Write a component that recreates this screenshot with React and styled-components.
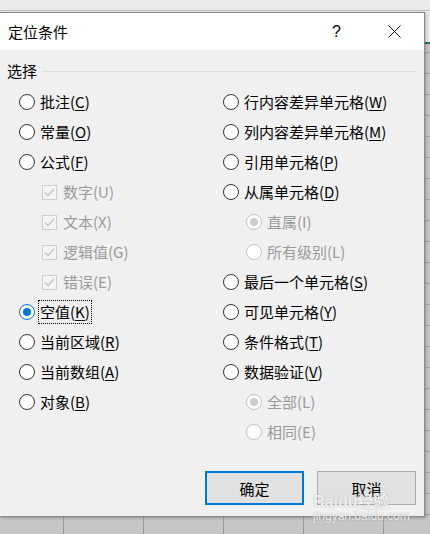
import styled, { createGlobalStyle } from "styled-components";

const GlobalStyle = createGlobalStyle`
  html, body {
    margin: 0;
    padding: 0;
    background: #c8c8c8;
  }
  * {
    box-sizing: border-box;
  }
`;

const leftItems = [
  { label: "批注", key: "C" },
  { label: "常量", key: "O" },
  { label: "公式", key: "F" },
  { label: "数字", key: "U", sub: "check", disabled: true },
  { label: "文本", key: "X", sub: "check", disabled: true },
  { label: "逻辑值", key: "G", sub: "check", disabled: true },
  { label: "错误", key: "E", sub: "check", disabled: true },
  { label: "空值", key: "K", checked: true, focus: true },
  { label: "当前区域", key: "R" },
  { label: "当前数组", key: "A" },
  { label: "对象", key: "B" },
];

const rightItems = [
  { label: "行内容差异单元格", key: "W" },
  { label: "列内容差异单元格", key: "M" },
  { label: "引用单元格", key: "P" },
  { label: "从属单元格", key: "D" },
  { label: "直属", key: "I", sub: "radio", disabled: true, checked: true },
  { label: "所有级别", key: "L", sub: "radio", disabled: true },
  { label: "最后一个单元格", key: "S" },
  { label: "可见单元格", key: "Y" },
  { label: "条件格式", key: "T" },
  { label: "数据验证", key: "V" },
  { label: "全部", key: "L", sub: "radio", disabled: true, checked: true },
  { label: "相同", key: "E", sub: "radio", disabled: true },
];

const Option = ({ item }) => {
  const { label, key, sub, disabled, checked, focus } = item;
  return (
    <Row $indent={!!sub}>
      {sub === "check" ? (
        <CheckBox>
          <svg width="13" height="13" viewBox="0 0 13 13">
            <path d="M2 6.5 L5 9.5 L11 3" fill="none" stroke="#c4c4c4" strokeWidth="1.3" />
          </svg>
        </CheckBox>
      ) : (
        <Radio $checked={checked} $disabled={disabled} />
      )}
      <Label $disabled={disabled} $focus={focus}>
        {label}(
        {disabled ? key : <Key>{key}</Key>})
      </Label>
    </Row>
  );
};

const App = () => {
  return (
    <>
      <GlobalStyle />
      <Page>
        <Dialog>
          <TitleBar>
            <Title>定位条件</Title>
            <TitleButtons>
              <Help>?</Help>
              <svg width="13" height="13" viewBox="0 0 13 13">
                <path d="M0.5 0.5 L12.5 12.5 M12.5 0.5 L0.5 12.5" stroke="#111" strokeWidth="1" />
              </svg>
            </TitleButtons>
          </TitleBar>
          <Body>
            <Legend>
              <LegendText>选择</LegendText>
              <LegendLine />
            </Legend>
            <Columns>
              <Column>
                {leftItems.map((item) => (
                  <Option key={item.label} item={item} />
                ))}
              </Column>
              <Column>
                {rightItems.map((item) => (
                  <Option key={item.label} item={item} />
                ))}
              </Column>
            </Columns>
            <Buttons>
              <Button $primary>确定</Button>
              <Button>取消</Button>
            </Buttons>
          </Body>
        </Dialog>
        <Watermark>
          <WmBig>Baidu经验</WmBig>
          <WmSmall>jingyan.baidu.com</WmSmall>
        </Watermark>
      </Page>
    </>
  );
};

export default App;

const Page = styled.div`
  position: relative;
  width: 430px;
  height: 534px;
  overflow: hidden;
  padding-top: 12px;
  background:
    linear-gradient(#c2c2c2, #c2c2c2) 0 10px / 100% 1px no-repeat,
    linear-gradient(#217346, #217346) 0 42px / 100% 2px no-repeat,
    linear-gradient(#e9e9e9, #e9e9e9) 0 0 / 100% 44px no-repeat,
    repeating-linear-gradient(90deg, transparent 0 63px, #9c9c9c 63px 64px, transparent 64px 80px),
    repeating-linear-gradient(180deg, transparent 0 10px, #a6a6a6 10px 11px, transparent 11px 21px),
    #c6c6c6;
`;

const Dialog = styled.div`
  width: 425px;
  height: 505px;
  background: #f0f0f0;
  border: 1px solid #8a8a8a;
  border-left: none;
  display: flex;
  flex-direction: column;
  font-family: "Noto Sans CJK SC", "Noto Sans", sans-serif;
  color: #000;
  box-shadow: 1px 1px 3px rgba(0, 0, 0, 0.25);
`;

const TitleBar = styled.div`
  height: 37px;
  background: #fff;
  display: flex;
  align-items: center;
  justify-content: space-between;
  padding: 0 23px 0 8px;
`;

const Title = styled.div`
  font-size: 15px;
  line-height: 20px;
`;

const TitleButtons = styled.div`
  display: flex;
  align-items: center;
  gap: 47px;
`;

const Help = styled.span`
  font-family: "Liberation Sans", sans-serif;
  font-size: 16px;
  line-height: 20px;
`;

const Body = styled.div`
  flex: 1;
  display: flex;
  flex-direction: column;
`;

const Legend = styled.div`
  display: flex;
  align-items: center;
  gap: 5px;
  height: 20px;
  margin: 11px 7px 0 7px;
`;

const LegendText = styled.span`
  font-size: 15px;
  line-height: 20px;
`;

const LegendLine = styled.div`
  flex: 1;
  height: 1px;
  background: #dcdcdc;
`;

const Columns = styled.div`
  display: grid;
  grid-template-columns: 204px 1fr;
  padding-left: 19px;
  margin-top: 6px;
`;

const Column = styled.div`
  display: flex;
  flex-direction: column;
`;

const Row = styled.div`
  height: 30px;
  display: flex;
  align-items: center;
  padding-left: ${({ $indent }) => ($indent ? "23px" : "0")};
`;

const Radio = styled.span`
  position: relative;
  width: 16px;
  height: 16px;
  border-radius: 50%;
  flex-shrink: 0;
  background: #fff;
  border: 1px solid
    ${({ $checked, $disabled }) =>
      $disabled ? "#c2c2c2" : $checked ? "#0078d7" : "#333"};
  margin-right: 5px;

  &::after {
    content: "";
    display: ${({ $checked }) => ($checked ? "block" : "none")};
    position: absolute;
    left: 3px;
    top: 3px;
    width: 8px;
    height: 8px;
    border-radius: 50%;
    background: ${({ $disabled }) => ($disabled ? "#cccccc" : "#0078d7")};
  }
`;

const CheckBox = styled.span`
  width: 15px;
  height: 15px;
  flex-shrink: 0;
  border: 1px solid #cccccc;
  background: #f4f4f4;
  display: flex;
  align-items: center;
  justify-content: center;
  margin-right: 6px;
`;

const Label = styled.span`
  font-size: 15px;
  line-height: 20px;
  white-space: nowrap;
  color: ${({ $disabled }) => ($disabled ? "#9a9a9a" : "#000")};
  outline: ${({ $focus }) => ($focus ? "1px dotted #000" : "none")};
  outline-offset: 1px;
`;

const Key = styled.span`
  text-decoration: underline;
  text-underline-offset: 2px;
`;

const Buttons = styled.div`
  display: flex;
  justify-content: flex-end;
  gap: 13px;
  padding-right: 8px;
  margin-top: 24px;
`;

const Button = styled.div`
  width: 99px;
  height: 34px;
  display: flex;
  align-items: center;
  justify-content: center;
  font-size: 15px;
  background: #e1e1e1;
  border: ${({ $primary }) => ($primary ? "2px solid #0078d7" : "1px solid #adadad")};
`;

const Watermark = styled.div`
  position: absolute;
  left: 313px;
  top: 494px;
  display: flex;
  flex-direction: column;
  align-items: flex-start;
  pointer-events: none;
  color: rgba(255, 255, 255, 0.85);
  text-shadow: 0 0 1px rgba(120, 120, 120, 0.7);
  font-family: "Liberation Sans", "Noto Sans CJK SC", sans-serif;
`;

const WmBig = styled.span`
  font-size: 16px;
  font-weight: bold;
  line-height: 15px;
`;

const WmSmall = styled.span`
  font-size: 12px;
  line-height: 14px;
`;
